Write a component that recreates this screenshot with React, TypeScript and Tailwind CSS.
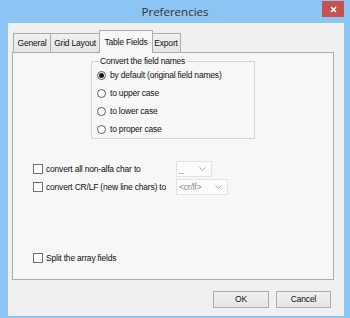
import React from 'react'

const Check = ({ checked = false }: { checked?: boolean }) => (
  <span className="w-[10px] h-[10px] border border-[#707070] bg-white shrink-0 flex items-center justify-center">
    {checked && <span className="w-[6px] h-[6px] bg-black" />}
  </span>
)

const Radio = ({ checked = false }: { checked?: boolean }) => (
  <span className="w-[9px] h-[9px] rounded-full border border-[#5a5a5a] bg-white shrink-0 flex items-center justify-center">
    {checked && <span className="w-[5px] h-[5px] rounded-full bg-[#1a1a1a]" />}
  </span>
)

const Chevron = () => (
  <svg width="7" height="4" viewBox="0 0 7 4" className="shrink-0">
    <path d="M0.5 0.5 L3.5 3.2 L6.5 0.5" fill="none" stroke="#a8a8a8" strokeWidth="1" />
  </svg>
)

const Dropdown = ({ value, width }: { value: string; width: string }) => (
  <div className={`h-[16px] ${width} border border-[#e3e3e3] bg-[#fcfcfc] flex items-center justify-between pl-[2px] pr-[5px] text-[#8a8a8a]`}>
    <span className="leading-none">{value}</span>
    <Chevron />
  </div>
)

const tabs = [
  { label: 'General', w: 'w-[38px]' },
  { label: 'Grid Layout', w: 'w-[50px]' },
  { label: 'Table Fields', w: 'w-[54px]', active: true },
  { label: 'Export', w: 'w-[30px]' },
]

export default function App() {
  return (
    <div className="w-[350px] h-[318px] bg-[#8cc4f4] flex flex-col font-['Liberation_Sans',sans-serif] text-[8.5px] tracking-[-0.2px] text-[#111] overflow-hidden">
      <div className="h-[23px] shrink-0 relative flex justify-center">
        <span className="pt-[4px] text-[11.5px] tracking-normal text-[#333] font-['Open_Sans',sans-serif] leading-[15px]">Preferencies</span>
        <div className="absolute right-[6px] top-[1px] w-[22px] h-[16px] bg-[#c75050] flex items-center justify-center">
          <svg width="7" height="7" viewBox="0 0 7 7">
            <path d="M1 1 L6 6 M6 1 L1 6" stroke="#fff" strokeWidth="1.6" />
          </svg>
        </div>
      </div>

      <div className="ml-[8px] mr-[6px] h-[293px] bg-[#f0f0f0] flex flex-col">
        {/* tabs */}
        <div className="h-[29px] shrink-0 flex items-end pl-[5px] relative z-10">
          {tabs.map((t) =>
            t.active ? (
              <div
                key={t.label}
                className={`${t.w} h-[23px] -mx-[1px] border border-b-0 border-[#acacac] bg-[#f7f7f7] flex items-start justify-center pt-[5px] relative -mb-[1px]`}
              >
                {t.label}
              </div>
            ) : (
              <div
                key={t.label}
                className={`${t.w} h-[19px] border border-b-0 border-[#acacac] bg-gradient-to-b from-[#f0f0f0] to-[#e5e5e5] flex items-center justify-center -ml-[1px] first:ml-0`}
              >
                {t.label}
              </div>
            )
          )}
        </div>

        {/* panel */}
        <div className="ml-[4px] w-[322px] h-[228px] shrink-0 border border-[#acacac] bg-[#f7f7f7] flex flex-col">
          <fieldset className="ml-[78px] mt-[3px] w-[164px] h-[83px] border border-[#d5d5d5] pl-[5px] pt-[1px]">
            <legend className="ml-[2px] px-[1px] leading-[10px]">Convert the field names</legend>
            <div className="flex flex-col gap-[8px] pt-[3px]">
              <label className="flex items-center gap-[4px] leading-[10px]">
                <Radio checked />
                by default (original field names)
              </label>
              <label className="flex items-center gap-[4px] leading-[10px]">
                <Radio />
                to upper case
              </label>
              <label className="flex items-center gap-[4px] leading-[10px]">
                <Radio />
                to lower case
              </label>
              <label className="flex items-center gap-[4px] leading-[10px]">
                <Radio />
                to proper case
              </label>
            </div>
          </fieldset>

          <div className="mt-[22px] ml-[20px] flex flex-col gap-[2px]">
            <div className="flex items-center">
              <div className="w-[143px] flex items-center gap-[3px]">
                <Check />
                <span>convert all non-alfa char to</span>
              </div>
              <Dropdown value="_" width="w-[36px]" />
            </div>
            <div className="flex items-center">
              <div className="w-[143px] flex items-center gap-[3px]">
                <Check />
                <span>convert CR/LF (new line chars) to</span>
              </div>
              <Dropdown value="<cr/lf>" width="w-[52px]" />
            </div>
          </div>

          <div className="mt-[57px] ml-[20px] flex items-center gap-[3px]">
            <Check />
            <span>Split the array fields</span>
          </div>
        </div>

        {/* buttons */}
        <div className="mt-[11px] mr-[13px] flex justify-end gap-[7px]">
          <button className="w-[56px] h-[17px] border border-[#acacac] bg-gradient-to-b from-[#f0f0f0] to-[#e5e5e5] text-[8.5px] leading-none">
            OK
          </button>
          <button className="w-[55px] h-[17px] border border-[#acacac] bg-gradient-to-b from-[#f0f0f0] to-[#e5e5e5] text-[8.5px] leading-none">
            Cancel
          </button>
        </div>
      </div>
    </div>
  )
}
